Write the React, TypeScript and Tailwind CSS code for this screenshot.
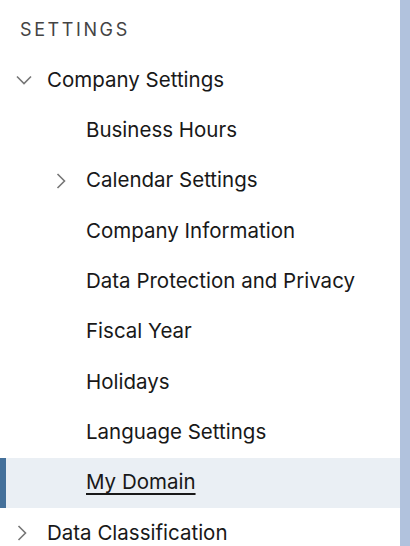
export default function App() {
  const items: { label: string; chevron?: boolean; active?: boolean }[] = [
    { label: "Business Hours" },
    { label: "Calendar Settings", chevron: true },
    { label: "Company Information" },
    { label: "Data Protection and Privacy" },
    { label: "Fiscal Year" },
    { label: "Holidays" },
    { label: "Language Settings" },
    { label: "My Domain", active: true },
  ];

  return (
    <div
      className="flex h-[546px] w-[410px] overflow-hidden bg-white"
      style={{ fontFamily: "Inter, 'Noto Sans', sans-serif" }}
    >
      <nav className="flex w-[400px] flex-col">
        <div className="flex h-[55px] shrink-0 items-center pl-5 pt-[3px] text-[18px] tracking-[2.6px] text-[#444444]">
          SETTINGS
        </div>

        {/* Company Settings (expanded) */}
        <div className="flex h-[50.33px] shrink-0 items-center text-[20.5px] text-[#181818]">
          <svg width="16" height="10" viewBox="0 0 16 10" className="ml-4 mr-[15px]">
            <polyline
              points="1,1.5 8,8.5 15,1.5"
              fill="none"
              stroke="#767676"
              strokeWidth="1.6"
            />
          </svg>
          <span>Company Settings</span>
        </div>

        {items.map((it) => (
          <div
            key={it.label}
            className={`flex h-[50.33px] shrink-0 items-center text-[20.5px] text-[#181818] ${
              it.active ? "border-l-[6px] border-[#44709a] bg-[#eaeff4]" : ""
            }`}
          >
            {it.chevron ? (
              <svg width="10" height="16" viewBox="0 0 10 16" className="ml-[56px] mr-[20px]">
                <polyline
                  points="1.5,1 8.5,8 1.5,15"
                  fill="none"
                  stroke="#767676"
                  strokeWidth="1.6"
                />
              </svg>
            ) : (
              <span className={it.active ? "w-[80px]" : "w-[86px]"} />
            )}
            <span className={it.active ? "underline underline-offset-[4px]" : ""}>{it.label}</span>
          </div>
        ))}

        {/* Data Classification */}
        <div className="flex h-[50.33px] shrink-0 items-center text-[20.5px] text-[#181818]">
          <svg width="10" height="16" viewBox="0 0 10 16" className="ml-[17px] mr-[20px]">
            <polyline
              points="1.5,1 8.5,8 1.5,15"
              fill="none"
              stroke="#767676"
              strokeWidth="1.6"
            />
          </svg>
          <span>Data Classification</span>
        </div>
      </nav>
      <div className="w-[10px] bg-[#b1c2dd]" />
    </div>
  );
}
